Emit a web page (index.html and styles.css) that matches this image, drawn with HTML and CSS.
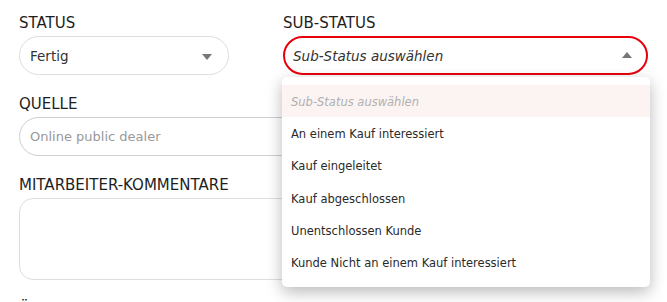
FILE: index.html
```html
<!DOCTYPE html>
<html lang="de">
<head>
<meta charset="utf-8">
<title>Formular</title>
<link rel="stylesheet" href="styles.css">
</head>
<body>
<form class="form">
  <div class="row">
    <div class="field field-status">
      <label class="label">STATUS</label>
      <div class="select">
        <span class="select-value">Fertig</span>
        <span class="arrow arrow-down"></span>
      </div>
    </div>
    <div class="field field-sub">
      <label class="label">SUB-STATUS</label>
      <div class="select select-open">
        <span class="select-value select-placeholder">Sub-Status auswählen</span>
        <span class="arrow arrow-up"></span>
      </div>
      <ul class="dropdown">
        <li class="option option-placeholder">Sub-Status auswählen</li>
        <li class="option">An einem Kauf interessiert</li>
        <li class="option">Kauf eingeleitet</li>
        <li class="option">Kauf abgeschlossen</li>
        <li class="option">Unentschlossen Kunde</li>
        <li class="option">Kunde Nicht an einem Kauf interessiert</li>
      </ul>
    </div>
  </div>
  <div class="field">
    <label class="label">QUELLE</label>
    <div class="input"><span class="input-placeholder">Online public dealer</span></div>
  </div>
  <div class="field">
    <label class="label">MITARBEITER-KOMMENTARE</label>
    <div class="textarea"></div>
  </div>
  <div class="field">
    <label class="label">ÜBERGABE</label>
  </div>
</form>
</body>
</html>
```
FILE: styles.css
```css
* { box-sizing: border-box; }
html, body { margin: 0; padding: 0; background: #fff; }
body {
  font-family: "DejaVu Sans", "Open Sans", sans-serif;
  color: #222;
  overflow: hidden;
  height: 302px;
}
.form {
  padding: 14px 19px 0;
  display: flex;
  flex-direction: column;
  gap: 20px;
}
.row {
  display: flex;
  gap: 54px;
}
.field {
  display: flex;
  flex-direction: column;
  gap: 4px;
  position: relative;
}
.field-status { width: 210px; }
.field-sub { flex: 1; }
.label {
  font-size: 15px;
  line-height: 18px;
  color: #1e1e1e;
}
.select {
  height: 39px;
  border: 1px solid #dedede;
  border-radius: 20px;
  display: flex;
  align-items: center;
  justify-content: space-between;
  padding: 0 16px 0 10px;
  font-size: 13.5px;
  color: #333;
}
.select-open {
  border: 2px solid #e8000b;
  padding: 0 14px 0 8px;
}
.select-placeholder { font-style: italic; color: #333; }
.arrow {
  width: 0; height: 0;
  border-left: 5.5px solid transparent;
  border-right: 5.5px solid transparent;
}
.arrow-down { border-top: 6px solid #777; margin-top: 2px; }
.arrow-up { border-bottom: 6px solid #777; margin-top: -2px; }
.dropdown {
  position: absolute;
  top: 63px;
  left: -1px;
  right: -2px;
  margin: 0;
  padding: 8px 0 9px;
  list-style: none;
  background: #fff;
  border-radius: 5px;
  box-shadow: 0 5px 16px rgba(0,0,0,0.28);
  z-index: 5;
}
.option {
  height: 32.2px;
  padding: 8px 0 0 9px;
  line-height: 18px;
  font-size: 11.5px;
  color: #2a2a2a;
}
.option-placeholder {
  background: #fcf4f3;
  font-style: italic;
  color: #b0b0b0;
}
.input {
  height: 39px;
  border: 1px solid #cfcfcf;
  border-radius: 20px;
  display: flex;
  align-items: center;
  padding: 0 10px;
  font-size: 13px;
}
.input-placeholder { color: #999; }
.textarea {
  height: 82px;
  border: 1px solid #dedede;
  border-radius: 14px;
}
```
